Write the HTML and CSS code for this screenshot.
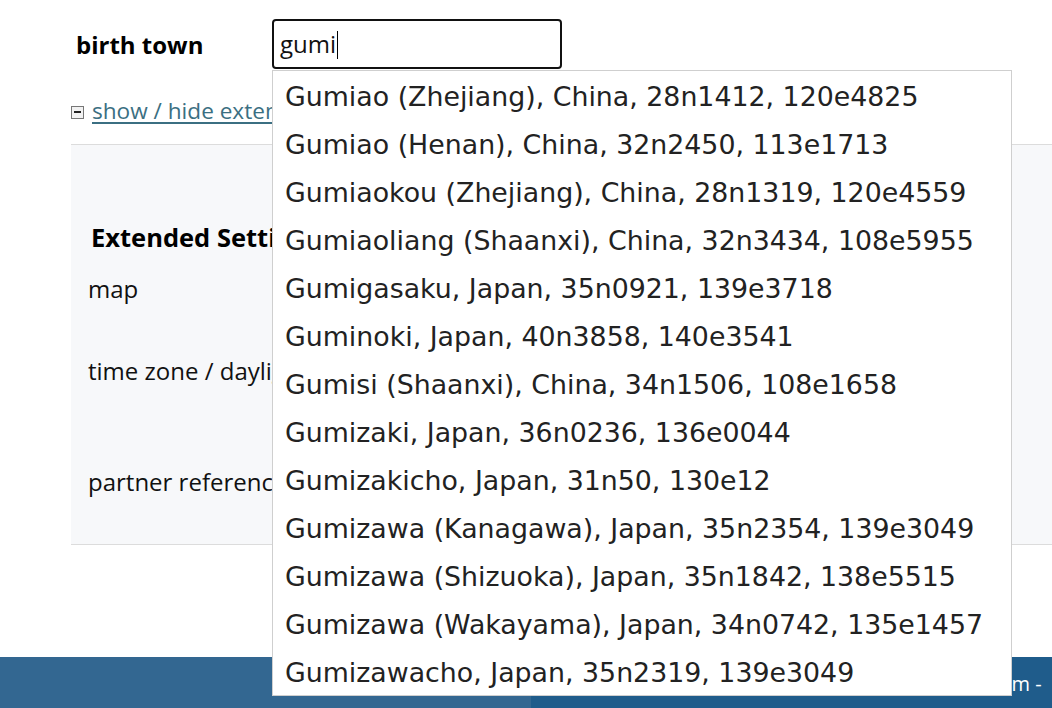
FILE: index.html
```html
<!DOCTYPE html>
<html lang="en">
<head>
<meta charset="utf-8">
<title>Birth data</title>
<link rel="stylesheet" href="styles.css">
</head>
<body>
<div class="page">
  <form class="form">
    <div class="row-birth">
      <label class="lbl" for="town">birth town</label>
      <div class="combo">
        <div class="input" id="town">gumi<span class="caret"></span></div>
        <ul class="suggest">
          <li>Gumiao (Zhejiang), China, 28n1412, 120e4825</li>
          <li>Gumiao (Henan), China, 32n2450, 113e1713</li>
          <li>Gumiaokou (Zhejiang), China, 28n1319, 120e4559</li>
          <li>Gumiaoliang (Shaanxi), China, 32n3434, 108e5955</li>
          <li>Gumigasaku, Japan, 35n0921, 139e3718</li>
          <li>Guminoki, Japan, 40n3858, 140e3541</li>
          <li>Gumisi (Shaanxi), China, 34n1506, 108e1658</li>
          <li>Gumizaki, Japan, 36n0236, 136e0044</li>
          <li>Gumizakicho, Japan, 31n50, 130e12</li>
          <li>Gumizawa (Kanagawa), Japan, 35n2354, 139e3049</li>
          <li>Gumizawa (Shizuoka), Japan, 35n1842, 138e5515</li>
          <li>Gumizawa (Wakayama), Japan, 34n0742, 135e1457</li>
          <li>Gumizawacho, Japan, 35n2319, 139e3049</li>
        </ul>
      </div>
    </div>
    <div class="toggle"><span class="minus"></span><a href="#" class="toggle-link">show / hide extended settings</a></div>
    <section class="panel">
      <h2 class="panel-title">Extended Settings</h2>
      <div class="prow prow-map">map</div>
      <div class="prow prow-tz">time zone / daylight saving time</div>
      <div class="prow prow-partner">partner reference</div>
    </section>
  </form>
</div>
<footer class="footer">
  <div class="foot-left"></div>
  <div class="foot-right"><span class="foot-text">www.astro.com -</span><span class="foot-text foot-next">Impressum</span></div>
</footer>
</body>
</html>
```
FILE: styles.css
```css
html, body {
  margin: 0;
  padding: 0;
  background: #ffffff;
  overflow: hidden;
}
body {
  font-family: "Open Sans", "Liberation Sans", sans-serif;
  color: #111;
  width: 1052px;
  height: 708px;
}
.page {
  height: 657px;
}
.row-birth {
  display: flex;
  padding-top: 19px;
  height: 50px;
}
.lbl {
  box-sizing: border-box;
  width: 272px;
  flex-shrink: 0;
  padding-left: 76px;
  font-weight: 700;
  font-size: 24px;
  line-height: 52px;
  color: #000;
}
.combo {
  position: relative;
}
.input {
  box-sizing: border-box;
  width: 290px;
  height: 50px;
  border: 2px solid #111;
  border-radius: 4px;
  padding-left: 6px;
  font-size: 24px;
  line-height: 46px;
  color: #111;
  background: #fff;
}
.caret {
  display: inline-block;
  width: 1px;
  height: 28px;
  background: #000;
  vertical-align: -6px;
  margin-left: 1px;
}
.suggest {
  position: absolute;
  left: 0;
  top: 51px;
  width: 740px;
  box-sizing: border-box;
  margin: 0;
  padding: 0;
  list-style: none;
  background: #fff;
  border: 1px solid #cfcfcf;
  z-index: 10;
  font-family: "DejaVu Sans", Verdana, sans-serif;
  font-size: 26.8px;
  color: #222;
}
.suggest li {
  height: 48px;
  line-height: 52px;
  padding-left: 12px;
  white-space: nowrap;
  overflow: hidden;
}
.toggle {
  display: flex;
  align-items: center;
  margin-top: 26px;
  padding-left: 71px;
  height: 30px;
  font-size: 22.6px;
}
.minus {
  box-sizing: border-box;
  width: 13px;
  height: 13px;
  border: 1px solid #777;
  background: #f2f2f2;
  position: relative;
  margin-right: 8px;
  margin-top: 5px;
  flex-shrink: 0;
}
.minus::after {
  content: "";
  position: absolute;
  left: 2px;
  right: 2px;
  top: 4px;
  height: 2px;
  background: #222;
}
.toggle-link {
  color: #3b6f82;
  text-decoration: underline;
  text-decoration-thickness: 2px;
  text-underline-offset: 3px;
  white-space: nowrap;
}
.panel {
  margin: 19px 0 0 71px;
  height: 323px;
  background: #f7f8fa;
  border-top: 1px solid #dcdcdc;
  border-bottom: 1px solid #dcdcdc;
  padding-top: 76px;
}
.panel-title {
  margin: 0 0 20px 0;
  padding-left: 20px;
  font-size: 25.5px;
  font-weight: 700;
  line-height: 32px;
  color: #000;
  white-space: nowrap;
}
.prow {
  padding-left: 17px;
  font-size: 24px;
  line-height: 32px;
  white-space: nowrap;
  color: #111;
}
.prow-map { height: 82px; }
.prow-tz { height: 111px; }
.prow-partner { height: 32px; }
.footer {
  display: flex;
  height: 51px;
  background: #336791;
}
.foot-left {
  width: 531px;
  flex-shrink: 0;
  background: #336791;
}
.foot-right {
  flex: 1;
  min-width: 0;
  background: #1f5c8b;
  color: #fff;
  font-size: 20px;
  line-height: 48px;
  white-space: nowrap;
  overflow: hidden;
  padding-left: 354px;
  padding-top: 3px;
}
.foot-next {
  margin-left: 14px;
}
```
